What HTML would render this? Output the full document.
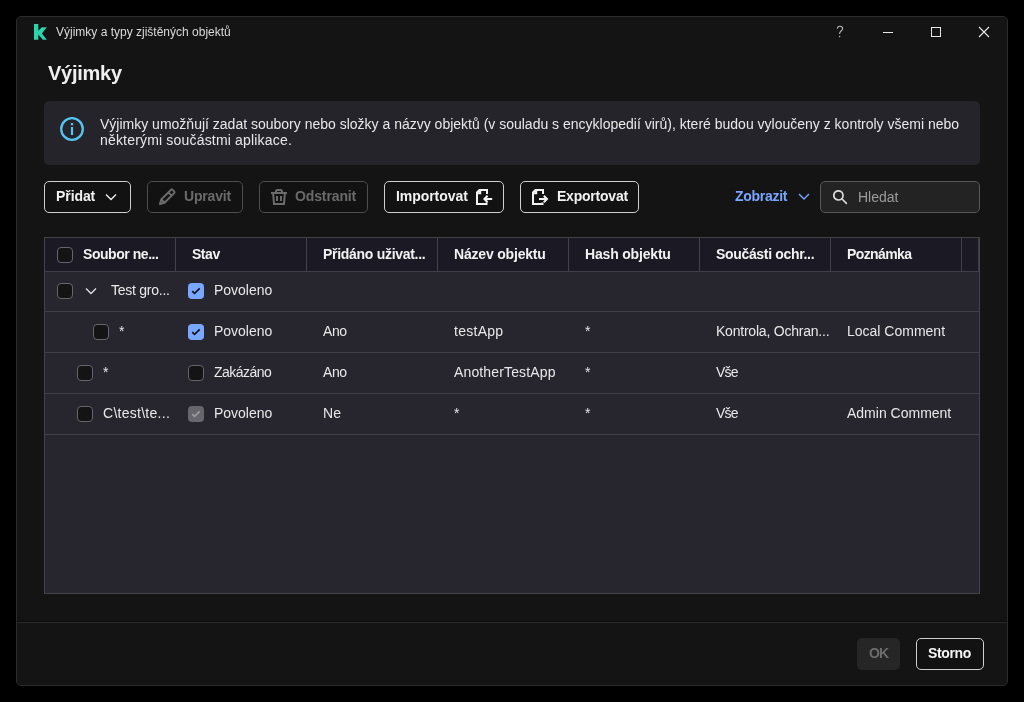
<!DOCTYPE html>
<html>
<head>
<meta charset="utf-8">
<style>
*{box-sizing:border-box;margin:0;padding:0}
html,body{width:1024px;height:702px;background:#000;overflow:hidden;font-family:"Liberation Sans",sans-serif;-webkit-font-smoothing:antialiased}
.a{position:absolute}
.t{position:absolute;white-space:nowrap;line-height:16px;font-size:14px;will-change:transform}
.b{font-weight:700}
#win{left:16px;top:16px;width:992px;height:670px;background:#141414;border:1px solid #2a2a2f;border-radius:5px}
.btn{position:absolute;top:181px;height:32px;border:1px solid #cfcfcf;border-radius:5px;background:#121212}
.dis{border-color:#4d4d4d}
.cb{position:absolute;width:16px;height:16px;border:1px solid #66656b;border-radius:4px;background:#141414}
.cbc{position:absolute;width:16px;height:16px;border-radius:4px;background:#79a6ff}
.cbd{position:absolute;width:16px;height:16px;border-radius:4px;background:#67666c}
.hl{position:absolute;height:1px;background:#413f47}
.vl{position:absolute;width:1px;background:#434248}
.rt{color:#e8e8e8}
.ht{color:#f2f2f2;font-weight:700}
</style>
</head>
<body>
<div id="win" class="a"></div>

<!-- title bar -->
<svg class="a" style="left:34px;top:24px" width="14" height="16" viewBox="0 0 14 16">
  <path d="M0 0 H4.3 V6.8 L7.8 3.3 H12.8 L7.9 9.4 L12.8 15.8 H8.9 L4.3 10.6 V15.8 H0 Z" fill="#2bd4ab"/>
</svg>
<div class="t" style="left:56px;top:24px;font-size:12px;color:#dadada">Výjimky a typy zjištěných objektů</div>

<svg class="a" style="left:830px;top:22px" width="20" height="20" viewBox="0 0 20 20">
  <path d="M7.3 6.6 C7.4 5.0 8.4 4.2 9.9 4.2 C11.5 4.2 12.6 5.2 12.6 6.5 C12.6 7.9 11.6 8.5 10.7 9.3 C10 9.9 9.6 10.5 9.6 11.9" fill="none" stroke="#b8b8b8" stroke-width="1.1"/>
  <circle cx="9.6" cy="14.4" r="0.75" fill="#b8b8b8"/>
</svg>
<div class="a" style="left:883px;top:32px;width:10px;height:1px;background:#e8e8e8"></div>
<div class="a" style="left:931px;top:27px;width:10px;height:10px;border:1px solid #e8e8e8"></div>
<svg class="a" style="left:978px;top:26px" width="12" height="12" viewBox="0 0 12 12">
  <path d="M1 1 L11 11 M11 1 L1 11" stroke="#e8e8e8" stroke-width="1.1"/>
</svg>

<!-- heading -->
<div class="t b" style="left:48px;top:61px;font-size:20px;line-height:24px;color:#efefef;letter-spacing:-0.25px">Výjimky</div>

<!-- info box -->
<div class="a" style="left:44px;top:101px;width:936px;height:64px;background:#25242b;border-radius:5px"></div>
<svg class="a" style="left:60px;top:117px" width="24" height="24" viewBox="0 0 24 24">
  <circle cx="12" cy="12" r="10.8" fill="none" stroke="#55c4ef" stroke-width="2.3"/>
  <rect x="10.9" y="10" width="2.2" height="8" fill="#55c4ef"/>
  <rect x="10.9" y="6" width="2.2" height="2.3" fill="#55c4ef"/>
</svg>
<div class="t" style="left:100px;top:116px;color:#e8e8e8">Výjimky umožňují zadat soubory nebo složky a názvy objektů (v souladu s encyklopedií virů), které budou vyloučeny z kontroly všemi nebo</div>
<div class="t" style="left:100px;top:132px;color:#e8e8e8;letter-spacing:0.18px">některými součástmi aplikace.</div>

<!-- toolbar -->
<div class="btn" style="left:44px;width:87px"></div>
<div class="t b" style="left:56px;top:188px;color:#f2f2f2;letter-spacing:-0.08px">Přidat</div>
<svg class="a" style="left:105px;top:193px" width="12" height="8" viewBox="0 0 12 8">
  <path d="M1 1.5 L6 6.5 L11 1.5" fill="none" stroke="#f2f2f2" stroke-width="1.3"/>
</svg>

<div class="btn dis" style="left:147px;width:96px"></div>
<svg class="a" style="left:155px;top:185px" width="24" height="24" viewBox="0 0 24 24">
  <g transform="translate(12 12) rotate(-45)">
  <path d="M-10 0 L-5.8 -2.3 H7.8 Q9 -2.3 9 -1.1 V1.1 Q9 2.3 7.8 2.3 H-5.8 Z M-5.8 -2.3 V2.3 M4.2 -2.3 V2.3" fill="none" stroke="#6b6b6b" stroke-width="2" stroke-linejoin="round"/>
  </g>
</svg>
<div class="t b" style="left:184px;top:188px;color:#6a6a6a;letter-spacing:-0.17px">Upravit</div>

<div class="btn dis" style="left:259px;width:109px"></div>
<svg class="a" style="left:271px;top:189px" width="16" height="16" viewBox="0 0 16 16">
  <path d="M0 4 H16 M5 4 V2.6 Q5 1 6.6 1 H9.4 Q11 1 11 2.6 V4 M2.1 4 L3 15 H13 L13.9 4 M6 7 V12 M10 7 V12" fill="none" stroke="#6b6b6b" stroke-width="2"/>
</svg>
<div class="t b" style="left:295px;top:188px;color:#6a6a6a;letter-spacing:-0.12px">Odstranit</div>

<div class="btn" style="left:384px;width:120px"></div>
<div class="t b" style="left:396px;top:188px;color:#f2f2f2;letter-spacing:-0.06px">Importovat</div>
<svg class="a" style="left:476px;top:189px" width="17" height="16" viewBox="0 0 17 16">
  <path d="M11 5 V1 H3.4 L1 3.4 V15 H10.5 V13.6 M4.2 1.2 V4.2 H1.2" fill="none" stroke="#f2f2f2" stroke-width="2"/>
  <path d="M16.2 10 H8.6 M11.6 6.8 L8.4 10 L11.6 13.2" fill="none" stroke="#f2f2f2" stroke-width="2"/>
</svg>

<div class="btn" style="left:520px;width:119px"></div>
<svg class="a" style="left:532px;top:189px" width="17" height="16" viewBox="0 0 17 16">
  <path d="M11 5 V1 H3.4 L1 3.4 V15 H10.5 V13.6 M4.2 1.2 V4.2 H1.2" fill="none" stroke="#f2f2f2" stroke-width="2"/>
  <path d="M7 10 H15 M11.8 6.8 L15 10 L11.8 13.2" fill="none" stroke="#f2f2f2" stroke-width="2"/>
</svg>
<div class="t b" style="left:557px;top:188px;color:#f2f2f2;letter-spacing:-0.22px">Exportovat</div>

<div class="t b" style="left:735px;top:188px;color:#79a6ff;letter-spacing:-0.29px">Zobrazit</div>
<svg class="a" style="left:798px;top:192px" width="12" height="10" viewBox="0 0 12 10">
  <path d="M1 2 L6 7 L11 2" fill="none" stroke="#79a6ff" stroke-width="1.4"/>
</svg>

<div class="a" style="left:820px;top:181px;width:160px;height:32px;background:#232323;border:1px solid #585858;border-radius:5px"></div>
<svg class="a" style="left:833px;top:190px" width="15" height="15" viewBox="0 0 15 15">
  <circle cx="5.4" cy="5.4" r="4.6" fill="none" stroke="#dcdcdc" stroke-width="1.7"/>
  <path d="M8.8 8.8 L13.4 13.4" stroke="#dcdcdc" stroke-width="1.6" stroke-linecap="round"/>
</svg>
<div class="t" style="left:858px;top:189px;color:#9c9c9c">Hledat</div>

<!-- table -->
<div class="a" style="left:44px;top:237px;width:936px;height:357px;background:#27262f;border:1px solid #434245"></div>
<div class="a" style="left:45px;top:238px;width:934px;height:33px;background:#1b1a24"></div>
<div class="a" style="left:978px;top:238px;width:1px;height:33px;background:#3e3d43"></div>
<div class="hl" style="left:45px;top:271px;width:934px"></div>
<div class="hl" style="left:45px;top:311px;width:934px"></div>
<div class="hl" style="left:45px;top:352px;width:934px"></div>
<div class="hl" style="left:45px;top:393px;width:934px"></div>
<div class="hl" style="left:45px;top:434px;width:934px"></div>
<div class="vl" style="left:175px;top:238px;height:33px"></div>
<div class="vl" style="left:306px;top:238px;height:33px"></div>
<div class="vl" style="left:437px;top:238px;height:33px"></div>
<div class="vl" style="left:568px;top:238px;height:33px"></div>
<div class="vl" style="left:699px;top:238px;height:33px"></div>
<div class="vl" style="left:830px;top:238px;height:33px"></div>
<div class="vl" style="left:961px;top:238px;height:33px"></div>

<div class="cb" style="left:57px;top:247px"></div>
<div class="t ht" style="left:83px;top:246px;letter-spacing:-0.45px">Soubor ne...</div>
<div class="t ht" style="left:192px;top:246px;letter-spacing:-0.47px">Stav</div>
<div class="t ht" style="left:323px;top:246px;letter-spacing:-0.29px">Přidáno uživat...</div>
<div class="t ht" style="left:454px;top:246px;letter-spacing:-0.19px">Název objektu</div>
<div class="t ht" style="left:585px;top:246px;letter-spacing:-0.18px">Hash objektu</div>
<div class="t ht" style="left:716px;top:246px;letter-spacing:-0.33px">Součásti ochr...</div>
<div class="t ht" style="left:847px;top:246px;letter-spacing:-0.6px">Poznámka</div>

<!-- row 1 -->
<div class="cb" style="left:57px;top:283px"></div>
<svg class="a" style="left:85px;top:286px" width="12" height="10" viewBox="0 0 12 10">
  <path d="M1 2.5 L6 7.5 L11 2.5" fill="none" stroke="#e2e2e2" stroke-width="1.3"/>
</svg>
<div class="t rt" style="left:111px;top:282px;letter-spacing:-0.25px">Test gro...</div>
<div class="cbc" style="left:188px;top:283px"><svg width="16" height="16" viewBox="0 0 16 16"><path d="M4.2 8.1 L6.6 10.4 L11.7 5.4" fill="none" stroke="#111" stroke-width="1.6"/></svg></div>
<div class="t rt" style="left:214px;top:282px;letter-spacing:-0.02px">Povoleno</div>

<!-- row 2 -->
<div class="cb" style="left:93px;top:324px"></div>
<div class="t rt" style="left:119px;top:323px">*</div>
<div class="cbc" style="left:188px;top:324px"><svg width="16" height="16" viewBox="0 0 16 16"><path d="M4.2 8.1 L6.6 10.4 L11.7 5.4" fill="none" stroke="#111" stroke-width="1.6"/></svg></div>
<div class="t rt" style="left:214px;top:323px;letter-spacing:-0.02px">Povoleno</div>
<div class="t rt" style="left:323px;top:323px;letter-spacing:-0.4px">Ano</div>
<div class="t rt" style="left:454px;top:323px;letter-spacing:0.27px">testApp</div>
<div class="t rt" style="left:585px;top:323px">*</div>
<div class="t rt" style="left:716px;top:323px;letter-spacing:-0.22px">Kontrola, Ochran...</div>
<div class="t rt" style="left:847px;top:323px">Local Comment</div>

<!-- row 3 -->
<div class="cb" style="left:77px;top:365px"></div>
<div class="t rt" style="left:103px;top:364px">*</div>
<div class="cb" style="left:188px;top:365px"></div>
<div class="t rt" style="left:214px;top:364px;letter-spacing:-0.52px">Zakázáno</div>
<div class="t rt" style="left:323px;top:364px;letter-spacing:-0.4px">Ano</div>
<div class="t rt" style="left:454px;top:364px;letter-spacing:0.14px">AnotherTestApp</div>
<div class="t rt" style="left:585px;top:364px">*</div>
<div class="t rt" style="left:716px;top:364px;letter-spacing:-0.85px">Vše</div>

<!-- row 4 -->
<div class="cb" style="left:77px;top:406px"></div>
<div class="t rt" style="left:103px;top:405px;letter-spacing:0.27px">C\test\te...</div>
<div class="cbd" style="left:188px;top:406px"><svg width="16" height="16" viewBox="0 0 16 16"><path d="M4.2 8.1 L6.6 10.4 L11.7 5.4" fill="none" stroke="#9c9ba1" stroke-width="1.6"/></svg></div>
<div class="t rt" style="left:214px;top:405px;letter-spacing:-0.02px">Povoleno</div>
<div class="t rt" style="left:323px;top:405px;letter-spacing:0.2px">Ne</div>
<div class="t rt" style="left:454px;top:405px">*</div>
<div class="t rt" style="left:585px;top:405px">*</div>
<div class="t rt" style="left:716px;top:405px;letter-spacing:-0.85px">Vše</div>
<div class="t rt" style="left:847px;top:405px">Admin Comment</div>

<!-- footer -->
<div class="a" style="left:17px;top:621px;width:990px;height:1px;background:#0d0d0d"></div>
<div class="a" style="left:17px;top:622px;width:990px;height:1px;background:#2b2b2b"></div>
<div class="a" style="left:857px;top:638px;width:43px;height:32px;background:#262626;border-radius:5px"></div>
<div class="t b" style="left:869px;top:645px;color:#6c6c6c;letter-spacing:-1.0px">OK</div>
<div class="btn" style="left:916px;top:638px;width:68px"></div>
<div class="t b" style="left:928px;top:645px;color:#f5f5f5;letter-spacing:-0.36px">Storno</div>
</body>
</html>
